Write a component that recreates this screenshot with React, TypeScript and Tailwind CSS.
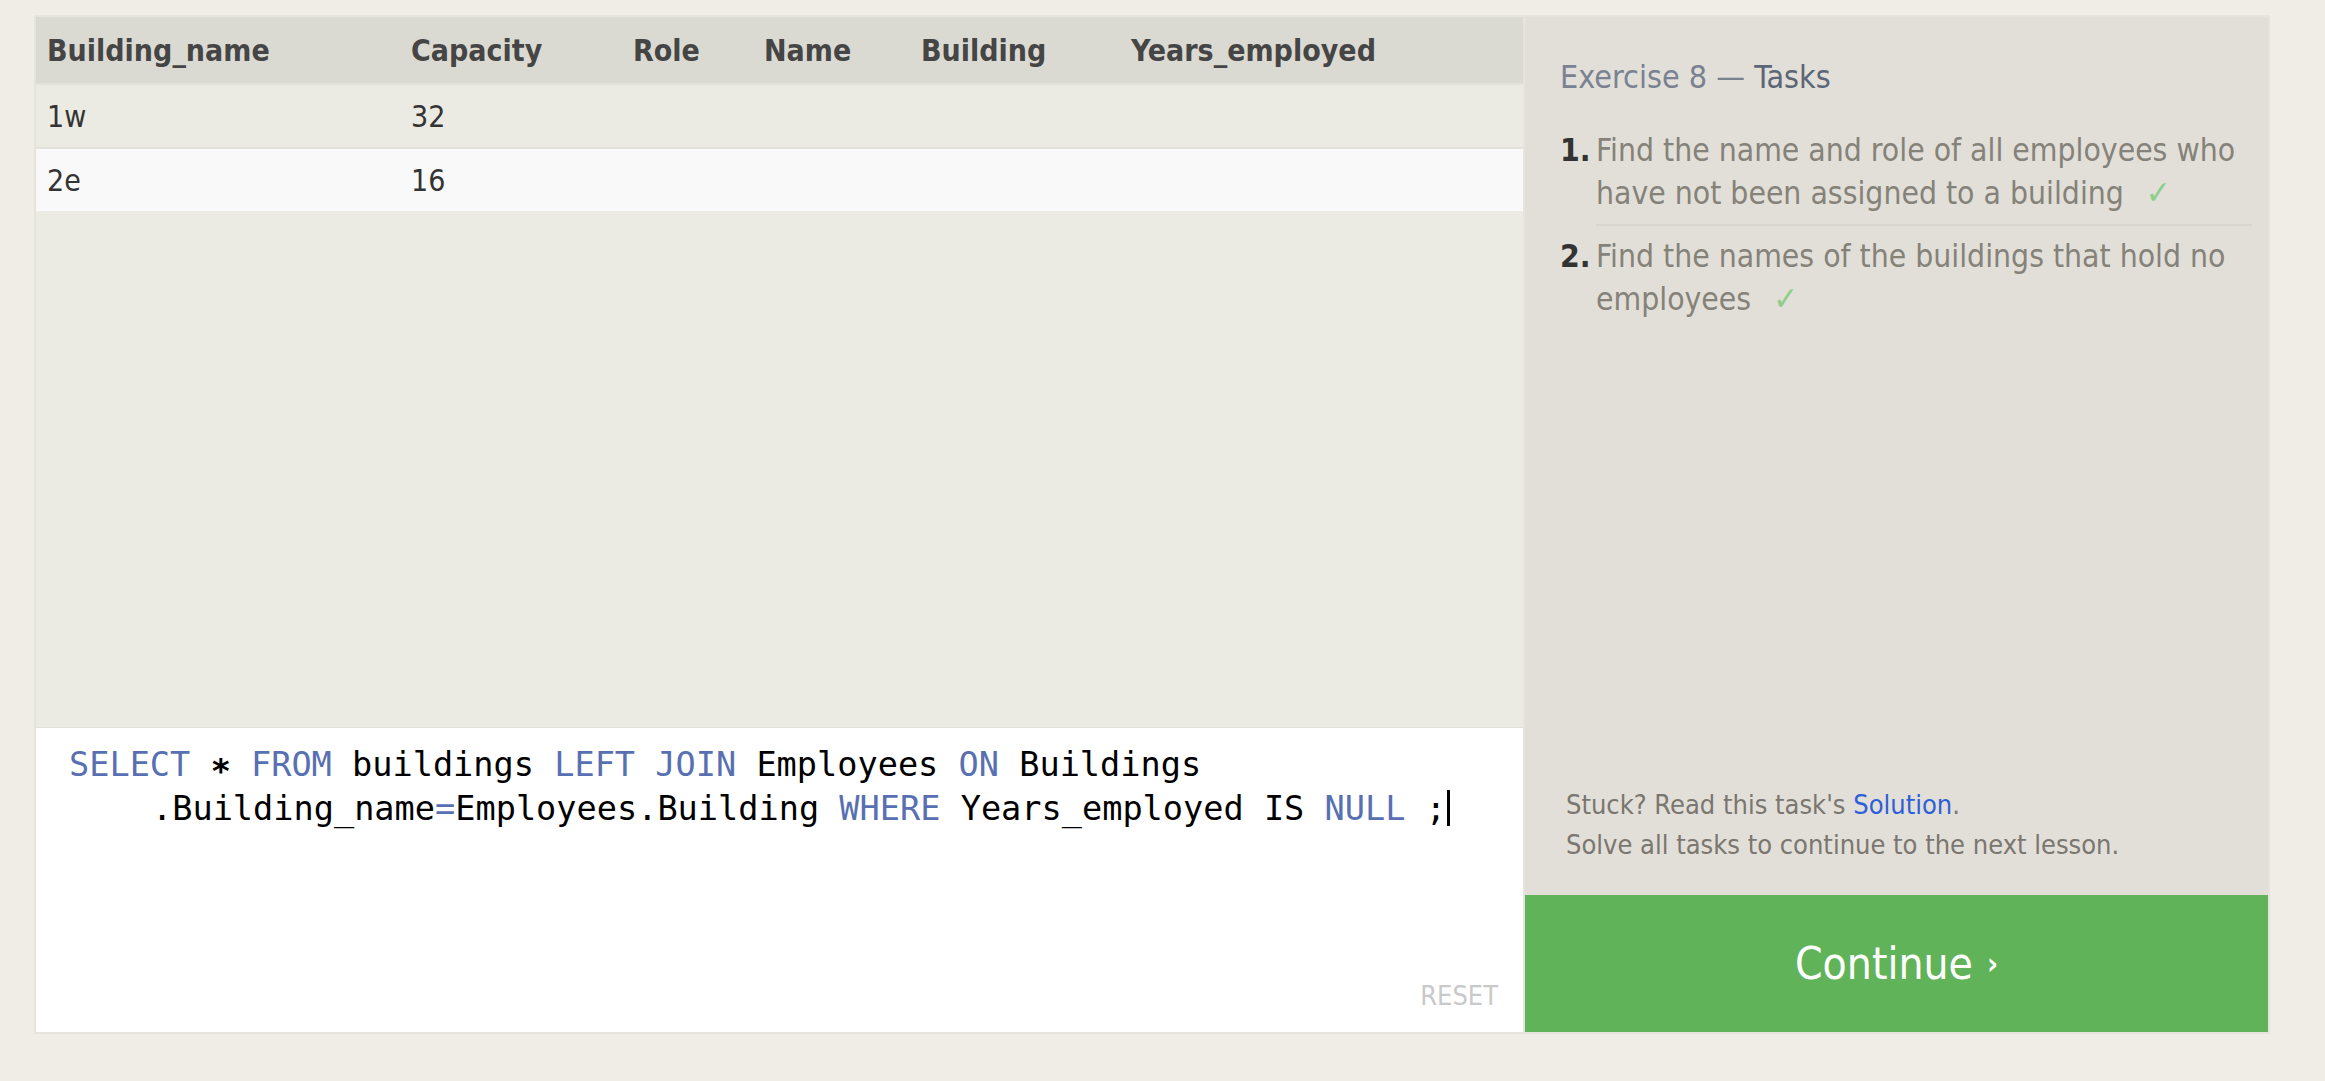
const uiFont = "font-['DejaVu_Sans_Condensed','DejaVu_Sans',sans-serif] [font-stretch:condensed]";

const columns = ['Building_name', 'Capacity', 'Role', 'Name', 'Building', 'Years_employed'];
const rows = [
  ['1w', '32', '', '', '', ''],
  ['2e', '16', '', '', '', ''],
];

const grid = 'grid grid-cols-[364px_222px_131px_157px_210px_1fr] pl-[11px]';

function Kw({ children }: { children: React.ReactNode }) {
  return <span className="text-[#5870b2]">{children}</span>;
}

function Check() {
  return (
    <span className="ml-[22px] inline-block text-[33px] leading-none text-[#8dcf8a]">✓</span>
  );
}

export default function App() {
  return (
    <div className={`min-h-[1081px] w-full bg-[#efede6] pt-[15px] pl-[34px] ${uiFont}`}>
      <div className="flex h-[1019px] w-[2236px] border-2 border-[#e6e4dc]">
        {/* left: results + editor */}
        <div className="flex w-[1487px] flex-col bg-[#ebeae3]">
          <div className={`${grid} h-[66px] items-center bg-[#dbdad2] text-[30px] font-bold text-[#454545]`}>
            {columns.map((c) => (
              <div key={c}>{c}</div>
            ))}
          </div>
          {rows.map((r, i) => (
            <div
              key={i}
              className={`${grid} h-[64px] items-center border-t-2 border-[#e2e1da] text-[30px] text-[#333] ${
                i % 2 === 1 ? 'bg-[#f9f9f9]' : 'bg-[#ebeae3]'
              }`}
            >
              {r.map((v, j) => (
                <div key={j}>{v}</div>
              ))}
            </div>
          ))}
          <div className="flex-1" />
          <div className="relative h-[305px] border-t border-[#e2e1da] bg-white pt-[17px] pl-[33px] font-['DejaVu_Sans_Mono',monospace] text-[33.6px] leading-[39px] text-black">
            <div className="whitespace-pre">
              <Kw>SELECT</Kw> <span className="font-bold">∗</span> <Kw>FROM</Kw> buildings <Kw>LEFT</Kw> <Kw>JOIN</Kw> Employees <Kw>ON</Kw> Buildings
            </div>
            <div className="whitespace-pre pl-[83px]">
              .Building_name<Kw>=</Kw>Employees.Building <Kw>WHERE</Kw> Years_employed IS <Kw>NULL</Kw> ;
              <span className="ml-[1px] inline-block h-[36px] w-[3px] translate-y-[6px] bg-black" />
            </div>
            <div className={`absolute right-[25px] bottom-[17px] text-[27px] text-[#c9c9c9] ${uiFont}`}>RESET</div>
          </div>
        </div>

        {/* right: tasks */}
        <div className="flex flex-1 flex-col border-l-2 border-[#e6e4dc]">
          <div className="flex flex-1 flex-col bg-[#e2dfd8] pt-[38px] pr-[16px] pl-[35px]">
            <div className="text-[32px] leading-[44px]">
              <span className="text-[#7a8292]">Exercise 8 — </span>
              <span className="text-[#5d6676]">Tasks</span>
            </div>
            <ol className="mt-[30px] text-[31.6px] leading-[43px] text-[#858279]">
              <li className="flex">
                <span className="w-[36px] shrink-0 font-bold text-[#333]">1.</span>
                <div className="flex-1 border-b-2 border-[#d9d7cd] pb-[9px]">
                  Find the name and role of all employees who have not been assigned to a building
                  <Check />
                </div>
              </li>
              <li className="flex pt-[9px]">
                <span className="w-[36px] shrink-0 font-bold text-[#333]">2.</span>
                <div className="flex-1">
                  Find the names of the buildings that hold no employees
                  <Check />
                </div>
              </li>
            </ol>
            <div className="mt-auto pb-[30px] pl-[6px] text-[27px] leading-[40px] text-[#7a7670]">
              <div>
                Stuck? Read this task's <span className="text-[#2e5fd8]">Solution</span>.
              </div>
              <div>Solve all tasks to continue to the next lesson.</div>
            </div>
          </div>
          <div className="flex h-[137px] items-center justify-center bg-[#61b35a] text-[44px] text-white">
            Continue <span className="ml-[14px] text-[30px] font-bold">›</span>
          </div>
        </div>
      </div>
    </div>
  );
}
